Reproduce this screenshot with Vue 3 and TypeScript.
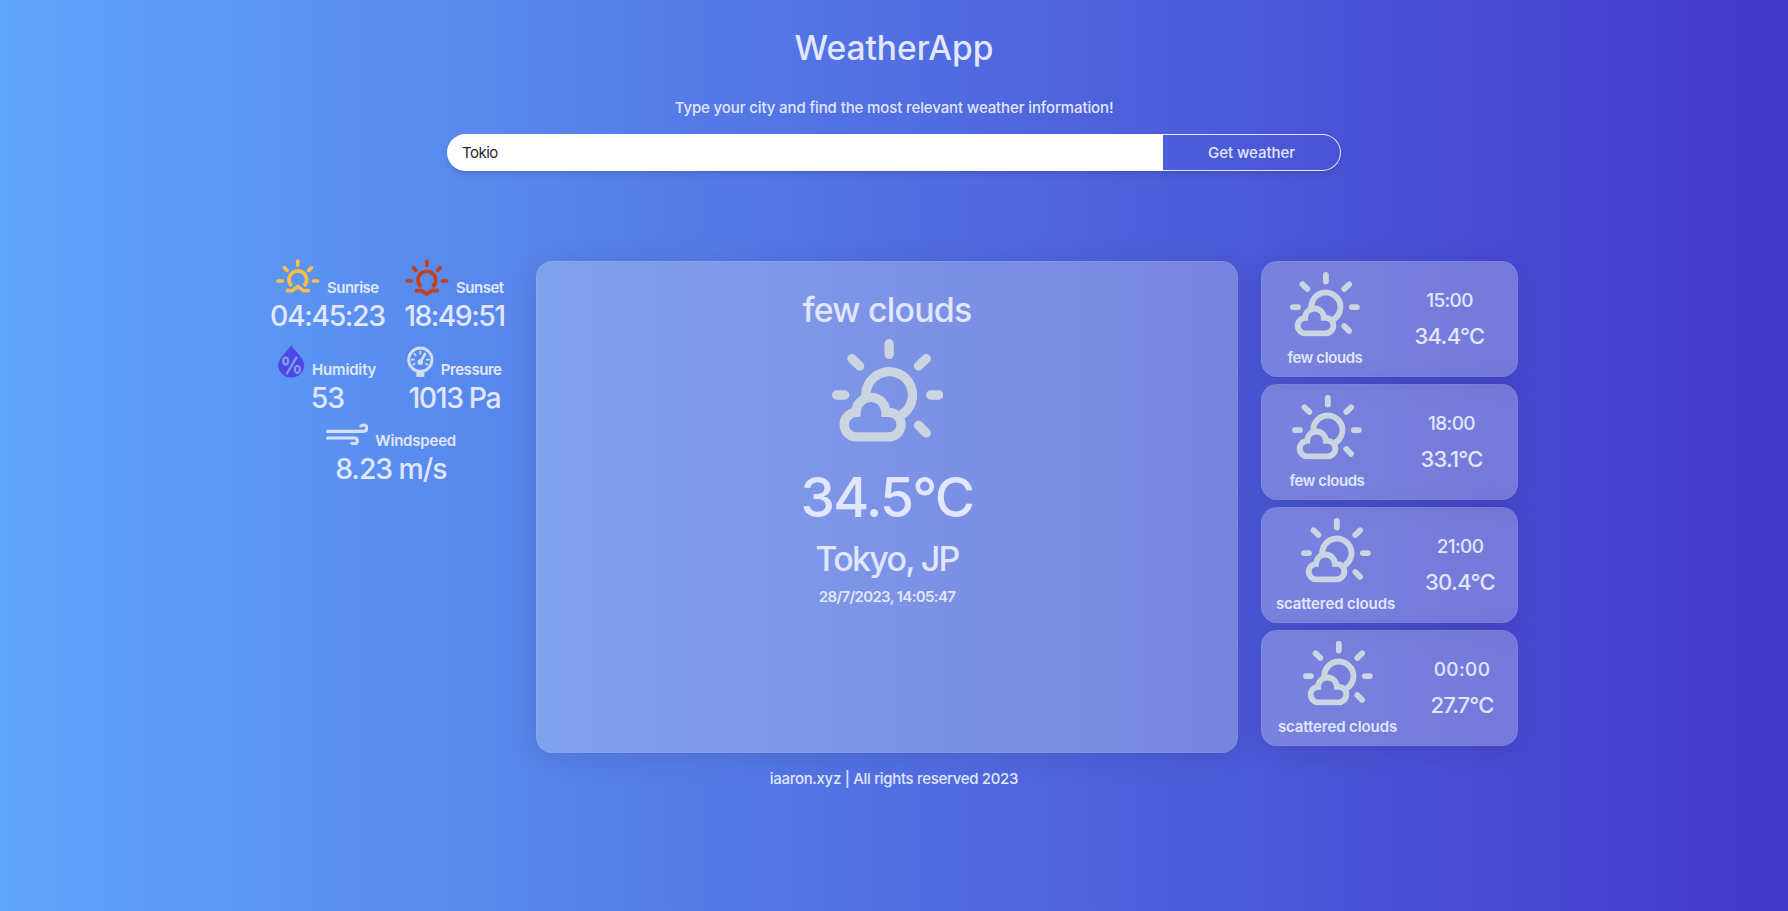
<script setup lang="ts">
import { ref } from 'vue'

interface Forecast {
  id: string
  description: string
  time: string
  temp: string
}

const city = ref('Tokio')

const forecasts: Forecast[] = [
  { id: 'f1', description: 'few clouds', time: '15:00', temp: '34.4°C' },
  { id: 'f2', description: 'few clouds', time: '18:00', temp: '33.1°C' },
  { id: 'f3', description: 'scattered clouds', time: '21:00', temp: '30.4°C' },
  { id: 'f4', description: 'scattered clouds', time: '00:00', temp: '27.7°C' },
]
</script>

<template>
  <div class="page">
    <svg class="defs" width="0" height="0" aria-hidden="true">
      <symbol id="partly-sunny" viewBox="155 177 335 310">
        <g fill="none" stroke="currentColor" stroke-width="28" stroke-linecap="round" stroke-linejoin="miter">
          <path d="M326.5 191V223M438 236L415 258M215 236L238 258M169 345H193M451 345H475M415 436L438 459" />
          <path d="M257 352A70 70 0 1 1 363 405" stroke-linecap="butt" />
          <path d="M230 471H325A37 37 0 0 0 326 397H317A45 45 0 1 0 227 397A37 37 0 0 0 230 471Z" />
        </g>
      </symbol>
    </svg>

    <header class="header">
      <h1 class="title">WeatherApp</h1>
      <p class="subtitle">Type your city and find the most relevant weather information!</p>
      <form class="search" @submit.prevent>
        <input v-model="city" class="search-input" type="text" />
        <button class="search-button" type="submit">Get weather</button>
      </form>
    </header>

    <main class="content">
      <section class="metrics">
        <div class="metric">
          <div class="metric-head">
            <svg class="icon-sunrise" viewBox="50 26 132 102">
              <g fill="none" stroke="currentColor" stroke-width="11" stroke-linecap="round" stroke-linejoin="round">
                <path d="M115.5 32V45M75 52L83 60M156 52L148 60M56 92H69M162 92H175" />
                <path d="M97 107A26.500 26.500 0 1 1 134 107" stroke-linecap="butt" />
                <path d="M84 121H99L115.500 108L132 121H147" />
              </g>
            </svg>
            <span class="label sunrise">Sunrise</span>
          </div>
          <p class="value v-sunrise">04:45:23</p>
        </div>
        <div class="metric">
          <div class="metric-head">
            <svg class="icon-sunset" viewBox="50 26 132 114">
              <g fill="none" stroke="currentColor" stroke-width="11" stroke-linecap="round" stroke-linejoin="round">
                <path d="M115.5 32V45M75 52L83 60M156 52L148 60M56 92H69M162 92H175" />
                <path d="M99 110A26.500 26.500 0 1 1 132 110" stroke-linecap="butt" />
                <path d="M84 121H101L115.500 132L130 121H147" />
              </g>
            </svg>
            <span class="label sunset">Sunset</span>
          </div>
          <p class="value v-sunset">18:49:51</p>
        </div>
        <div class="metric">
          <div class="metric-head">
            <svg class="icon-drop" viewBox="58 29 80 102">
              <path fill="#4f46e5" d="M97.500 30C106 45 137 68 137 92A39.500 38.500 0 0 1 58.500 92C58.500 68 89 45 97.500 30Z" />
              <g class="percent" fill="none" stroke-width="7" stroke-linecap="round">
                <ellipse cx="81" cy="77" rx="7.500" ry="10.500" />
                <ellipse cx="116" cy="102" rx="7.500" ry="10.500" />
                <path d="M113 67L85 114" />
              </g>
            </svg>
            <span class="label humidity">Humidity</span>
          </div>
          <p class="value v-humidity">53</p>
        </div>
        <div class="metric">
          <div class="metric-head">
            <svg class="icon-gauge" viewBox="443 30 80 95">
              <g fill="none" stroke="currentColor">
                <circle cx="483" cy="71" r="35" stroke-width="8.500" />
                <path stroke-width="5" stroke-linecap="round" d="M483 46V53M465 53L469 58M457 71H464M502 71H509M461 86L466 83M505 86L500 83" />
                <path stroke-width="8" stroke-linecap="round" d="M497 54L484 77" />
              </g>
              <circle cx="483" cy="78" r="8.500" fill="currentColor" />
              <path fill="currentColor" d="M471 105H495V125H471Z" />
            </svg>
            <span class="label pressure">Pressure</span>
          </div>
          <p class="value v-pressure">1013 Pa</p>
        </div>
        <div class="metric wide">
          <div class="metric-head">
            <svg class="icon-wind" viewBox="200 260 128 68">
              <g fill="none" stroke="currentColor" stroke-width="9.500">
                <path d="M201 285H311C326 285 326 266 314 266C308 266 305 268 303 272" />
                <path d="M201 305H285C297 305 297 323 285 323C280 323 277 321 276 317" />
              </g>
            </svg>
            <span class="label wind">Windspeed</span>
          </div>
          <p class="value v-wind">8.23 m/s</p>
        </div>
      </section>

      <section class="current">
        <h2 class="current-description">few clouds</h2>
        <svg class="current-icon"><use href="#partly-sunny" /></svg>
        <p class="current-temp">34.5°C</p>
        <p class="current-city">Tokyo, JP</p>
        <p class="current-date">28/7/2023, 14:05:47</p>
      </section>

      <section class="forecast">
        <article v-for="f in forecasts" :key="f.id" class="forecast-card" :class="f.id">
          <div class="forecast-sky">
            <svg class="forecast-icon"><use href="#partly-sunny" /></svg>
            <p class="forecast-description">{{ f.description }}</p>
          </div>
          <div class="forecast-values">
            <p class="forecast-time">{{ f.time }}</p>
            <p class="forecast-temp">{{ f.temp }}</p>
          </div>
        </article>
      </section>
    </main>

    <footer class="footer">iaaron.xyz | All rights reserved 2023</footer>
  </div>
</template>

<style>
body {
  margin: 0;
  overflow: hidden;
}
</style>

<style scoped>
.page {
  box-sizing: border-box;
  height: 911px;
  padding-top: 28px;
  overflow: hidden;
  display: flex;
  flex-direction: column;
  align-items: center;
  background: linear-gradient(to right, #60a5fa, #4338ca);
  color: #e0e7ff;
  font-family: "Inter", "Liberation Sans", sans-serif;
  font-size: 15px;
  font-weight: 500;
  line-height: 24px;
}
.defs { position: absolute; }
h1, h2, p { margin: 0; font-weight: inherit; white-space: nowrap; }
svg { display: block; flex: none; }

.header {
  display: flex;
  flex-direction: column;
  align-items: center;
}
.title {
  font-size: 33.5px;
  line-height: 41px;
}
.subtitle {
  margin-top: 27px;
  letter-spacing: -0.12px;
}
.search {
  box-sizing: border-box;
  width: 894px;
  height: 37px;
  margin-top: 14px;
  display: flex;
  border-radius: 19px;
  box-shadow: 0 4px 6px -1px rgb(0 0 0 / 0.1), 0 2px 4px -2px rgb(0 0 0 / 0.1);
}
.search-input {
  box-sizing: border-box;
  width: 716px;
  padding: 0 15px;
  border: 0;
  outline: 0;
  border-radius: 19px 0 0 19px;
  background: #fff;
  color: #1f2430;
  font: inherit;
  font-weight: 400;
  letter-spacing: -0.5px;
}
.search-button {
  flex: 1;
  padding: 0;
  border: 1px solid #e0e7ff;
  border-left: 0;
  border-radius: 0 19px 19px 0;
  background: transparent;
  color: inherit;
  font: inherit;
  letter-spacing: -0.05px;
}

.content {
  width: 1248px;
  height: 492px;
  margin-top: 90px;
  display: grid;
  grid-template-columns: 243px 702.5px 257px;
  column-gap: 22.75px;
}

.metrics {
  display: grid;
  grid-template-columns: 116px 116px;
  grid-template-rows: 82px 71px 70px;
  column-gap: 11px;
  margin-left: -0.7px;
}
.metric {
  display: flex;
  flex-direction: column;
  align-items: center;
}
.wide { grid-column: 1 / 3; }
.metric-head {
  height: 38.6px;
  display: flex;
  flex: none;
  justify-content: center;
  gap: 7px;
}
.label { align-self: flex-end; font-weight: 560; }
.sunrise { letter-spacing: -0.55px; }
.sunset { letter-spacing: -0.5px; }
.humidity { letter-spacing: -0.17px; }
.pressure { letter-spacing: -0.45px; }
.wind { letter-spacing: -0.2px; }
.value {
  font-size: 28.4px;
  line-height: 32px;
}
.v-sunrise { letter-spacing: -1.39px; }
.v-sunset { letter-spacing: -1.56px; }
.v-humidity { letter-spacing: -1px; }
.v-pressure { letter-spacing: -1.38px; }
.v-wind { letter-spacing: -1.06px; }
.icon-sunrise { width: 44px; height: 34px; margin-top: -2px; color: #fbbf45; }
.icon-sunset { width: 44px; height: 38px; margin-top: -2px; color: #c2411c; }
.icon-drop { width: 26.7px; height: 34px; margin-top: 2.3px; }
.percent { stroke: #7d9cf4; }
.icon-gauge { width: 26.7px; height: 31.7px; margin-top: 2.5px; color: #d3def3; }
.icon-wind { width: 42.7px; height: 22.7px; margin-top: 8.6px; color: #d6e1f6; }

.current,
.forecast-card {
  box-sizing: border-box;
  border-radius: 16px;
  background: rgb(226 232 240 / 0.3);
  box-shadow: 0 4px 30px rgb(0 0 0 / 0.1), inset 0 0 0 1px rgb(255 255 255 / 0.05);
}
.current {
  padding-top: 28.5px;
  display: flex;
  flex-direction: column;
  align-items: center;
}
.current-description {
  font-size: 34px;
  line-height: 40px;
  letter-spacing: -0.83px;
}
.current-icon {
  width: 111.6px;
  height: 103.3px;
  margin: 9.5px 0 0 1px;
  color: #cbd5e1;
}
.current-temp {
  margin-top: 25px;
  font-size: 55px;
  line-height: 60px;
  letter-spacing: -1.76px;
}
.current-city {
  margin-top: 12.1px;
  font-size: 34px;
  line-height: 40px;
  letter-spacing: -1.75px;
}
.current-date {
  margin-top: 5.6px;
  font-weight: 560;
  letter-spacing: -0.65px;
}

.forecast {
  display: flex;
  flex-direction: column;
  gap: 7.5px;
}
.forecast-card {
  height: 115.5px;
  display: flex;
}
.f1 { padding-left: 4px; }
.f2 { padding-left: 6px; }
.f3 { padding-left: 14.5px; }
.f4 { padding-left: 16.5px; }
.forecast-sky {
  width: 120px;
  padding-top: 11px;
  display: flex;
  flex-direction: column;
  align-items: center;
}
.forecast-icon {
  width: 70px;
  height: 64.7px;
  color: #cbd5e1;
}
.forecast-description {
  margin-top: 9.8px;
  font-weight: 560;
  letter-spacing: -0.42px;
}
.f3 .forecast-description,
.f4 .forecast-description { letter-spacing: -0.1px; }
.forecast-values {
  width: 90px;
  margin-left: 19.5px;
  padding-top: 26.3px;
  display: flex;
  flex-direction: column;
  align-items: center;
}
.forecast-time {
  font-size: 19px;
  line-height: 28px;
  letter-spacing: -0.67px;
}
.f4 .forecast-time { letter-spacing: 0.35px; }
.forecast-temp {
  margin-top: 4.6px;
  font-size: 22px;
  line-height: 32px;
  letter-spacing: -0.62px;
}
.f2 .forecast-temp { letter-spacing: -0.8px; }
.f4 .forecast-temp { letter-spacing: -0.86px; }

.footer {
  margin-top: 14.2px;
  letter-spacing: -0.32px;
}
</style>
